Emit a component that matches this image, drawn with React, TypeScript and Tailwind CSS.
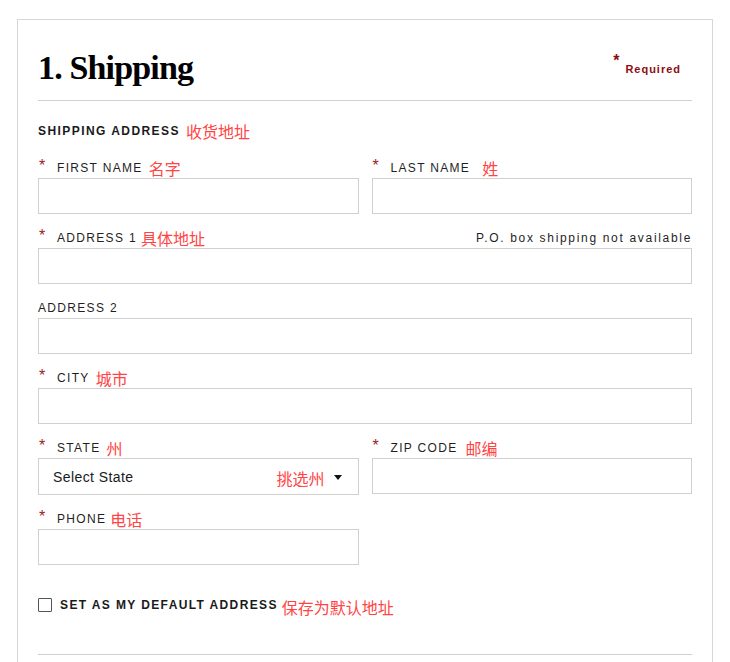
const sans = "font-['Liberation_Sans',Arial,'Noto_Sans_CJK_SC',sans-serif]";

function Label({
  text,
  cn,
  required = true,
  gap = "ml-[6px]",
  right,
}: {
  text: string;
  cn?: string;
  required?: boolean;
  gap?: string;
  right?: string;
}) {
  return (
    <div className="flex h-[24px] items-center pt-[4px]">
      {required && (
        <span className="w-[19px] self-start pl-[1px] text-[16px] leading-none text-[#9b1c1c]">*</span>
      )}
      <span className="text-[12px] uppercase tracking-[0.11em] text-[#1f1f24]">{text}</span>
      {cn && (
        <span className={`${gap} font-['Noto_Sans_CJK_SC',sans-serif] text-[16px] leading-none text-[#ff4444]`}>
          {cn}
        </span>
      )}
      {right && (
        <span className="ml-auto text-[12px] tracking-[0.14em] text-[#1f1f24]">{right}</span>
      )}
    </div>
  );
}

function Input() {
  return <div className="h-[36px] border border-[#d2cfcf] bg-white" />;
}

export default function App() {
  return (
    <div className={`min-h-screen bg-white ${sans}`}>
      <div className="ml-[17px] mt-[19px] w-[696px] border border-[#d6d6d6] px-[20px] pb-[20px]">
        {/* Header */}
        <div className="flex items-start justify-between border-b border-[#d2cfcf] pb-[15px] pt-[31px]">
          <h1 className="font-['Liberation_Serif',serif] text-[34px] font-bold leading-none tracking-[-0.025em] text-black">
            1. Shipping
          </h1>
          <div className="mr-[11px] mt-[2px] flex items-start text-[#8b0d12]">
            <span className="text-[16px] font-bold leading-none">*</span>
            <span className="ml-[6px] mt-[8px] text-[11px] font-bold tracking-[0.09em]">Required</span>
          </div>
        </div>

        <div className="mt-[21px] flex h-[18px] items-center">
          <span className="text-[12px] font-bold uppercase tracking-[0.12em] text-[#1a1a1a]">Shipping Address</span>
          <span className="ml-[6px] font-['Noto_Sans_CJK_SC',sans-serif] text-[16px] leading-none text-[#ff4444]">
            收货地址
          </span>
        </div>

        <div className="mt-[14px] flex flex-col gap-[10px]">
          <div className="grid grid-cols-2 gap-x-[13px]">
            <div>
              <Label text="First Name" cn="名字" />
              <Input />
            </div>
            <div>
              <Label text="Last Name" cn="姓" gap="ml-[12px]" />
              <Input />
            </div>
          </div>

          <div>
            <Label text="Address 1" cn="具体地址" gap="ml-[4px]" right="P.O. box shipping not available" />
            <Input />
          </div>

          <div>
            <Label text="Address 2" required={false} />
            <Input />
          </div>

          <div>
            <Label text="City" cn="城市" />
            <Input />
          </div>

          <div className="grid grid-cols-2 gap-x-[13px]">
            <div>
              <Label text="State" cn="州" />
              <div className="flex h-[37px] items-center border border-[#d2cfcf] pl-[14px] pr-[16px] pt-[2px]">
                <span className="text-[14px] tracking-[0.03em] text-[#1a1a1a]">Select State</span>
                <span className="ml-auto font-['Noto_Sans_CJK_SC',sans-serif] text-[16px] leading-none text-[#ff4444]">
                  挑选州
                </span>
                <svg className="ml-[9px]" width="8" height="5" viewBox="0 0 8 5">
                  <path d="M0 0h8L4 5z" fill="#111" />
                </svg>
              </div>
            </div>
            <div>
              <Label text="Zip Code" cn="邮编" gap="ml-[8px]" />
              <Input />
            </div>
          </div>

          <div className="grid grid-cols-2 gap-x-[13px]">
            <div>
              <Label text="Phone" cn="电话" gap="ml-[4px]" />
              <Input />
            </div>
          </div>
        </div>

        <label className="mt-[30px] flex items-center">
          <span className="h-[14px] w-[14px] rounded-[1px] border border-[#555]" />
          <span className="ml-[8px] text-[12px] font-bold uppercase tracking-[0.115em] text-[#1a1a1a]">
            Set as my default address
          </span>
          <span className="ml-[4px] mt-[4px] font-['Noto_Sans_CJK_SC',sans-serif] text-[16px] leading-none text-[#ff4444]">
            保存为默认地址
          </span>
        </label>

        <div className="mt-[39px] border-t border-[#d2cfcf]" />
        <div className="h-[40px]" />
      </div>
    </div>
  );
}
